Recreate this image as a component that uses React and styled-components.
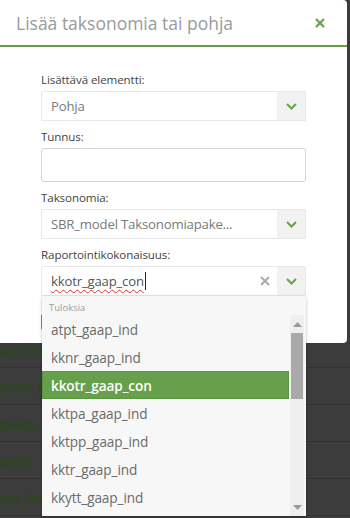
import React from "react";
import styled, { createGlobalStyle } from "styled-components";

const Global = createGlobalStyle`
  html, body { margin: 0; padding: 0; }
  body {
    background: #3c3c3c;
    font-family: "Open Sans", "Noto Sans", sans-serif;
    width: 350px;
    height: 518px;
    overflow: hidden;
  }
  #root { position: relative; width: 350px; height: 518px; overflow: hidden; }
`;

const Backdrop = styled.div`
  margin-left: -60px;
  padding-top: 331px;
  display: flex;
  flex-direction: column;
`;

const BgRow = styled.div`
  height: 36px;
  border-bottom: 1px solid #313131;
  display: flex;
  align-items: center;
  padding-left: 8px;
  font-size: 15px;
  font-weight: 700;
  color: #2d461f;
  white-space: nowrap;
`;

const Modal = styled.div`
  position: absolute;
  top: 0;
  left: 0;
  width: 347px;
  height: 343px;
  background: #fff;
  border-radius: 0 4px 4px 0;
  display: flex;
  flex-direction: column;
`;

const Header = styled.div`
  border-bottom: 2px solid #67a04a;
  display: flex;
  align-items: center;
  justify-content: space-between;
  padding: 0 21px 0 16px;
  box-sizing: border-box;
  height: 47px;
`;

const Title = styled.h2`
  margin: 0;
  font-size: 17.5px;
  font-weight: 400;
  color: #9a9a9a;
`;

const CloseBtn = styled.button`
  border: 0;
  background: none;
  padding: 0;
  width: 12px;
  height: 12px;
  display: flex;
  align-items: center;
  justify-content: center;
`;

const Body = styled.div`
  padding: 24px 0 0 41px;
  width: 265px;
  display: flex;
  flex-direction: column;
  gap: 7px;
`;

const Field = styled.div`
  display: flex;
  flex-direction: column;
  gap: 2px;
`;

const Label = styled.label`
  font-size: 11.6px;
  line-height: 18px;
  color: #444;
  letter-spacing: -0.1px;
`;

const Box = styled.div`
  height: ${(p) => p.$h}px;
  box-sizing: border-box;
  border: 1px solid ${(p) => (p.$strong ? "#d4d4d4" : "#e8e8e8")};
  border-radius: ${(p) => (p.$round ? 3 : 1)}px;
  display: flex;
  align-items: stretch;
  background: #fff;
`;

const Value = styled.div`
  flex: 1;
  display: flex;
  align-items: center;
  padding-left: 9px;
  font-size: 13.2px;
  letter-spacing: -0.2px;
  color: ${(p) => (p.$dark ? "#555" : "#7a7a7a")};
  white-space: nowrap;
  overflow: hidden;
`;

const Typed = styled.span`
  text-decoration: underline wavy #e0302a;
  text-decoration-thickness: 1px;
  text-underline-offset: 3px;
  border-right: 1px solid #222;
  padding-right: 1px;
  line-height: 18px;
`;

const ArrowBtn = styled.div`
  width: 28px;
  background: #f2f2f2;
  display: flex;
  align-items: center;
  justify-content: center;
`;

const ClearBtn = styled.div`
  width: 24px;
  display: flex;
  align-items: center;
  justify-content: center;
`;

const Footer = styled.div`
  padding: 18px 0 0 41px;
`;

const SaveBtn = styled.div`
  width: 80px;
  height: 16px;
  background: #67a04a;
  border-radius: 2px;
`;

const Dropdown = styled.div`
  position: absolute;
  left: 42px;
  top: 296px;
  width: 264px;
  height: 220px;
  background: #f7f7f7;
  box-shadow: 0 1px 3px rgba(0, 0, 0, 0.25);
  display: flex;
  flex-direction: column;
  z-index: 2;
`;

const GroupTitle = styled.div`
  height: 18px;
  display: flex;
  align-items: flex-end;
  padding-left: 7px;
  font-size: 9.5px;
  line-height: 12px;
  color: #a0a0a0;
`;

const ListWrap = styled.div`
  flex: 1;
  display: flex;
  overflow: hidden;
  padding-top: 1px;
`;

const List = styled.div`
  flex: 1;
  overflow: hidden;
  display: flex;
  flex-direction: column;
`;

const Item = styled.div`
  height: 28px;
  flex-shrink: 0;
  box-sizing: border-box;
  display: flex;
  align-items: center;
  padding-left: 8px;
  font-size: 13.6px;
  letter-spacing: -0.1px;
  color: ${(p) => (p.$active ? "#fff" : "#6a6a6a")};
  font-weight: ${(p) => (p.$active ? 600 : 400)};
  background: ${(p) => (p.$active ? "#67a04a" : "transparent")};
  border: 1px solid ${(p) => (p.$active ? "#5b9340" : "transparent")};
  margin-right: 1px;
`;

const Scrollbar = styled.div`
  width: 14px;
  margin-right: 2px;
  background: #efefef;
  display: flex;
  flex-direction: column;
  align-items: stretch;
`;

const ScrollArrow = styled.div`
  height: 18px;
  display: flex;
  align-items: center;
  justify-content: center;
`;

const Thumb = styled.div`
  height: 66px;
  margin: 0 1px;
  background: #a9a9a9;
`;

const Spacer = styled.div`
  flex: 1;
`;

const Chevron = () => (
  <svg width="11" height="7" viewBox="0 0 11 7">
    <path d="M1 1 L5.5 5.5 L10 1" fill="none" stroke="#67a04a" strokeWidth="2" />
  </svg>
);

const Cross = ({ color, size, w }) => (
  <svg width={size} height={size} viewBox="0 0 10 10">
    <path d="M1 1 L9 9 M9 1 L1 9" fill="none" stroke={color} strokeWidth={w} />
  </svg>
);

const Tri = ({ up }) => (
  <svg width="9" height="5" viewBox="0 0 9 5">
    <path d={up ? "M0 5 L4.5 0 L9 5 Z" : "M0 0 L4.5 5 L9 0 Z"} fill="#9a9a9a" />
  </svg>
);

const bgRows = [
  "kkn_gaap_ind",
  "kkotr_gaap_ind",
  "kktpp_gaap_ind",
  "kkytr_gaap",
  "kkn_gaap_ind",
];

const items = [
  "atpt_gaap_ind",
  "kknr_gaap_ind",
  "kkotr_gaap_con",
  "kktpa_gaap_ind",
  "kktpp_gaap_ind",
  "kktr_gaap_ind",
  "kkytt_gaap_ind",
  "kkytt_gaap_pub",
];

export default function App() {
  return (
    <>
      <Global />
      <Backdrop>
        {bgRows.map((t, i) => (
          <BgRow key={i}>{t}</BgRow>
        ))}
      </Backdrop>
      <Modal>
        <Header>
          <Title>Lisää taksonomia tai pohja</Title>
          <CloseBtn aria-label="Sulje">
            <Cross color="#67a04a" size={10} w={2.2} />
          </CloseBtn>
        </Header>
        <Body>
          <Field>
            <Label>Lisättävä elementti:</Label>
            <Box $h={30}>
              <Value>Pohja</Value>
              <ArrowBtn>
                <Chevron />
              </ArrowBtn>
            </Box>
          </Field>
          <Field>
            <Label>Tunnus:</Label>
            <Box $h={34} $strong $round>
              <Value />
            </Box>
          </Field>
          <Field>
            <Label>Taksonomia:</Label>
            <Box $h={30}>
              <Value>SBR_model Taksonomiapake...</Value>
              <ArrowBtn>
                <Chevron />
              </ArrowBtn>
            </Box>
          </Field>
          <Field>
            <Label>Raportointikokonaisuus:</Label>
            <Box $h={30}>
              <Value $dark>
                <Typed>kkotr_gaap_con</Typed>
              </Value>
              <ClearBtn>
                <Cross color="#a8a8a8" size={10} w={1.8} />
              </ClearBtn>
              <ArrowBtn>
                <Chevron />
              </ArrowBtn>
            </Box>
          </Field>
        </Body>
        <Footer>
          <SaveBtn />
        </Footer>
      </Modal>
      <Dropdown>
        <GroupTitle>Tuloksia</GroupTitle>
        <ListWrap>
          <List>
            {items.map((t, i) => (
              <Item key={t} $active={i === 2}>
                {t}
              </Item>
            ))}
          </List>
          <Scrollbar>
            <ScrollArrow>
              <Tri up />
            </ScrollArrow>
            <Thumb />
            <Spacer />
            <ScrollArrow>
              <Tri />
            </ScrollArrow>
          </Scrollbar>
        </ListWrap>
      </Dropdown>
    </>
  );
}
